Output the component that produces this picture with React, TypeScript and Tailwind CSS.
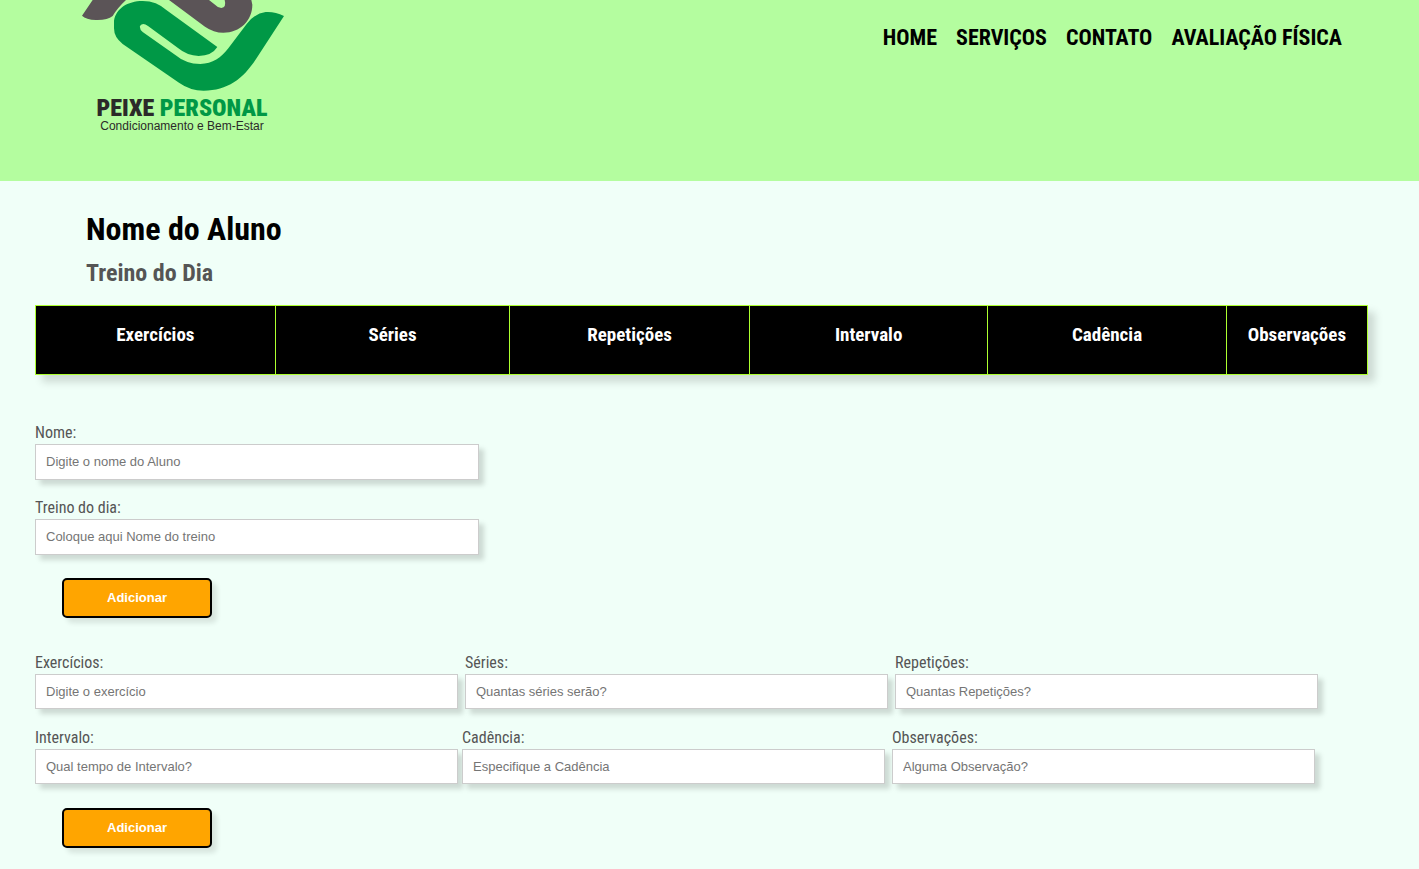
import React from "react";

type FieldProps = {
  id: string;
  label: string;
  placeholder: string;
  className?: string;
  inputClassName?: string;
};

const columns = [
  { title: "Exercícios", width: "w-[18%]" },
  { title: "Séries", width: "w-[17.6%]" },
  { title: "Repetições", width: "w-[18%]" },
  { title: "Intervalo", width: "w-[17.9%]" },
  { title: "Cadência", width: "w-[17.9%]" },
  { title: "Observações", width: "w-[10.6%]" },
];

const links = ["HOME", "SERVIÇOS", "CONTATO", "AVALIAÇÃO FÍSICA"];

function Logo(): React.ReactElement {
  return (
    <a href="#" className="flex w-[200px] flex-col items-center text-black">
      <svg viewBox="66 0 612 276" className="block h-[92px] w-[204px] self-start" aria-hidden="true">
        <g fill="#5b5457">
          <path d="M98 0 L66 47 Q78 59 108 60 Q142 61 158 48 Q172 24 198 0 Z" />
          <path d="M327 0 L435 80 Q461 98 490 98 C540 98 577 61 577 14 L574 0 H494 Q500 21 484 24 Q474 24 466 15 L447 0 Z" />
        </g>
        <path
          fill="#009846"
          d="M248 3 Q290 3 320 31 L472 141 Q456 167 416 168 Q381 167 355 145 L264 78 Q248 66 240 78 Q238 88 248 96 L345 164 Q377 191 421 192 C458 191 484 173 505 145 L560 72 Q584 40 617 36 Q644 34 672 48 L592 171 C552 235 505 272 431 272 Q391 272 357 248 L188 132 Q162 112 162 85 V62 C168 26 202 3 248 3 Z"
        />
      </svg>
      <span className="mt-1 text-[24px] leading-6 font-black">
        <span className="text-[#2b2a29]">PEIXE</span> <span className="text-[#009846]">PERSONAL</span>
      </span>
      <span className="font-['Liberation_Sans',Arial,sans-serif] text-[12px] leading-3 text-[#2b2a29]">
        Condicionamento e Bem-Estar
      </span>
    </a>
  );
}

function Field({ id, label, placeholder, className = "", inputClassName = "h-[35px]" }: FieldProps): React.ReactElement {
  return (
    <div className={`flex flex-col ${className}`}>
      <label htmlFor={id} className="h-[23px] text-base leading-6 text-[#555]">
        {label}
      </label>
      <input
        id={id}
        type="text"
        placeholder={placeholder}
        className={`${inputClassName} w-full border border-[#ccc] bg-white px-[10px] pb-px font-['Liberation_Sans',Arial,sans-serif] text-[13px] shadow-[5px_5px_5px_rgba(0,0,0,0.15)] placeholder:text-[#757575]`}
      />
    </div>
  );
}

function AddButton(): React.ReactElement {
  return (
    <button
      type="submit"
      className="ml-[27px] block h-10 w-[150px] rounded-[5px] border-2 border-black bg-[#ffa500] font-['Liberation_Sans',Arial,sans-serif] text-[13px] font-bold text-white shadow-[5px_5px_5px_rgba(0,0,0,0.1)]"
    >
      Adicionar
    </button>
  );
}

export default function App(): React.ReactElement {
  return (
    <div className="min-h-screen bg-[#f0fff8] font-['Roboto_Condensed','Liberation_Sans_Narrow',sans-serif]">
      <header className="flex items-start justify-between bg-[#b4fd9f] pr-[77px] pb-[49px] pl-[82px]">
        <Logo />
        <nav className="flex gap-[19px] pt-6 text-[22px] leading-7 font-bold text-black">
          {links.map((link) => (
            <a key={link} href="#">
              {link}
            </a>
          ))}
        </nav>
      </header>

      <main className="pr-[51px] pb-5 pl-[35px]">
        <h1 className="pt-7 pl-[51px] text-[32px] leading-10 font-bold text-black">Nome do Aluno</h1>
        <h2 className="pt-2 pl-[51px] text-2xl leading-8 font-bold text-[#555]">Treino do Dia</h2>

        <table className="mt-4 w-full table-fixed border-collapse border border-[#adff2f] bg-black shadow-[7px_7px_8px_rgba(0,0,0,0.15)]">
          <thead>
            <tr>
              {columns.map((column) => (
                <th
                  key={column.title}
                  scope="col"
                  className={`${column.width} h-[69px] border border-[#adff2f] pb-[10px] text-[19px] leading-6 font-bold text-white`}
                >
                  {column.title}
                </th>
              ))}
            </tr>
          </thead>
        </table>

        <form className="pt-[46px]" onSubmit={(e) => e.preventDefault()}>
          <div className="flex w-1/3 flex-col gap-4">
            <Field id="nome" label="Nome:" placeholder="Digite o nome do Aluno" inputClassName="h-9" />
            <Field id="treino" label="Treino do dia:" placeholder="Coloque aqui Nome do treino" inputClassName="h-9" />
          </div>
          <div className="pt-[23px]">
            <AddButton />
          </div>
        </form>

        <form className="pt-[33px]" onSubmit={(e) => e.preventDefault()}>
          <div className="flex gap-[7px] pr-[50px]">
            <Field className="flex-1" id="exercicios" label="Exercícios:" placeholder="Digite o exercício" />
            <Field className="flex-1" id="series" label="Séries:" placeholder="Quantas séries serão?" />
            <Field className="flex-1" id="repeticoes" label="Repetições:" placeholder="Quantas Repetições?" />
          </div>
          <div className="flex pt-[17px] pr-[53px]">
            <Field className="mr-1 flex-1" id="intervalo" label="Intervalo:" placeholder="Qual tempo de Intervalo?" />
            <Field className="mr-[7px] flex-1" id="cadencia" label="Cadência:" placeholder="Especifique a Cadência" />
            <Field className="flex-1" id="observacoes" label="Observações:" placeholder="Alguma Observação?" />
          </div>
          <div className="pt-6">
            <AddButton />
          </div>
        </form>
      </main>
    </div>
  );
}
